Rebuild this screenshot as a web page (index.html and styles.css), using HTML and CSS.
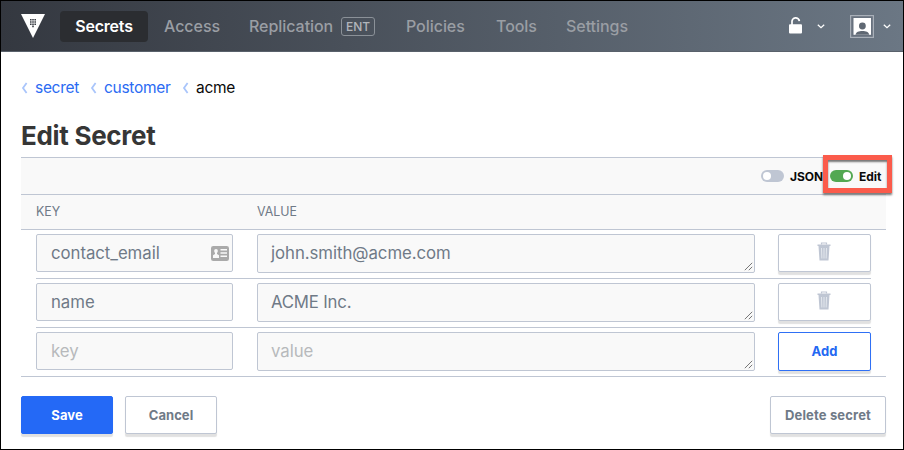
FILE: index.html
```html
<!DOCTYPE html>
<html lang="en">
<head>
<meta charset="utf-8">
<title>Edit Secret</title>
<link rel="stylesheet" href="styles.css">
</head>
<body>
<div class="frame">
  <header class="nav">
    <svg class="logo" width="24" height="24" viewBox="0 0 24 24"><path fill="#fff" d="M0 0h24L12 24z"/><path fill="#3b3f46" d="M9 5h1.6v1.6H9zM11.2 5h1.6v1.6h-1.6zM13.4 5H15v1.6h-1.6zM9 7.2h1.6v1.6H9zM11.2 7.2h1.6v1.6h-1.6zM13.4 7.2H15v1.6h-1.6zM9 9.4h1.6V11H9zM11.2 9.4h1.6V11h-1.6zM13.4 9.4H15V11h-1.6zM11.2 11.6h1.6v1.6h-1.6z"/></svg>
    <nav class="links">
      <a class="link active">Secrets</a>
      <a class="link access">Access</a>
      <a class="link replication">Replication</a><span class="tag">ENT</span>
      <a class="link policies">Policies</a>
      <a class="link tools">Tools</a>
      <a class="link settings">Settings</a>
    </nav>
    <div class="status">
      <svg class="lock" width="14" height="18" viewBox="0 0 14 18"><path fill="none" stroke="#fff" stroke-width="1.7" d="M3 8V5a3.7 3.7 0 0 1 7.4-.8"/><rect y="7.2" width="13" height="9.3" rx="1" fill="#fff"/></svg>
      <svg class="chev" width="8" height="5" viewBox="0 0 8 5"><path d="M.8.8 4 3.7 7.2.8" fill="none" stroke="#fff" stroke-width="1.3"/></svg>
      <svg class="user" width="24" height="23" viewBox="0 0 24 23"><rect x=".6" y=".6" width="22.8" height="21.8" fill="#68727f" stroke="#a8afb8" stroke-width="1.2"/><rect x="3.5" y="3" width="17.5" height="16.8" fill="#fff"/><circle cx="12.4" cy="11" r="3.4" fill="#5f6873"/><path d="M5.5 19.8c.5-2.700 3.300-3.700 6.900-3.700s6.300 1 6.800 3.700z" fill="#5f6873"/></svg>
      <svg class="chev" width="8" height="5" viewBox="0 0 8 5"><path d="M.8.8 4 3.7 7.2.8" fill="none" stroke="#fff" stroke-width="1.3"/></svg>
    </div>
  </header>
  <main class="page">
    <div class="crumbs">
      <svg class="sep" width="7" height="12" viewBox="0 0 7 12"><path d="M5.6 1 2 6l3.6 5"/></svg><a class="c1">secret</a>
      <svg class="sep" width="7" height="12" viewBox="0 0 7 12"><path d="M5.6 1 2 6l3.6 5"/></svg><a class="c2">customer</a>
      <svg class="sep" width="7" height="12" viewBox="0 0 7 12"><path d="M5.6 1 2 6l3.6 5"/></svg><span class="c3">acme</span>
    </div>
    <h1>Edit Secret</h1>
    <div class="toolbar">
      <span class="switch"></span><span class="opt json">JSON</span>
      <span class="switch on"></span><span class="opt edit">Edit</span>
      <div class="highlight"></div>
    </div>
    <div class="head"><span class="h-key">KEY</span><span class="h-value">VALUE</span></div>
    <div class="rows">
      <div class="row">
        <div class="field"><span>contact_email</span>
          <svg class="card" width="18" height="15" viewBox="0 0 18 15"><rect x=".8" y=".8" width="16.4" height="13.4" rx="1.5" fill="#aaa" stroke="#aaa" stroke-width="1.6"/><circle cx="5" cy="5" r="1.9" fill="#f9f9f9"/><path d="M4 6h2v2l2 1.2V12H2V9.2L4 8zM9.500 3h6.500v1.500H9.500zM9.500 6.200h6.500v1.500H9.500zM9.500 9.400h6.500v1.500H9.500z" fill="#f9f9f9"/></svg></div>
        <div class="field area"><span>john.smith@acme.com</span><svg class="grip" width="9" height="9" viewBox="0 0 9 9"><path d="M.8 8.2 8.2.8M4.8 8.2 8.2 4.8"/></svg></div>
        <button class="btn"><svg class="trash" width="14" height="19" viewBox="0 0 14 19"><path d="M4.500 2.500V1h5v1.500" fill="none" stroke="#bfc6d3" stroke-width="1.2"/><path d="M.5 2.500h13v1.600H.5zM1.500 4.100h11L11.500 18.500h-9z" fill="#bfc6d3"/><path d="M4.500 6l.4 10.500M7 6v10.500M9.500 6l-.4 10.500" stroke="#e4e8ee" stroke-width="1" fill="none"/></svg></button>
      </div>
      <div class="row">
        <div class="field"><span>name</span></div>
        <div class="field area"><span class="t-acme">ACME Inc.</span><svg class="grip" width="9" height="9" viewBox="0 0 9 9"><path d="M.8 8.2 8.2.8M4.8 8.2 8.2 4.8"/></svg></div>
        <button class="btn"><svg class="trash" width="14" height="19" viewBox="0 0 14 19"><path d="M4.500 2.500V1h5v1.500" fill="none" stroke="#bfc6d3" stroke-width="1.2"/><path d="M.5 2.500h13v1.600H.5zM1.500 4.100h11L11.500 18.500h-9z" fill="#bfc6d3"/><path d="M4.500 6l.4 10.500M7 6v10.500M9.500 6l-.4 10.500" stroke="#e4e8ee" stroke-width="1" fill="none"/></svg></button>
      </div>
      <div class="row">
        <div class="field empty"><span>key</span></div>
        <div class="field area empty"><span>value</span><svg class="grip" width="9" height="9" viewBox="0 0 9 9"><path d="M.8 8.2 8.2.8M4.8 8.2 8.2 4.8"/></svg></div>
        <button class="btn add">Add</button>
      </div>
    </div>
    <div class="actions">
      <button class="btn save">Save</button>
      <button class="btn cancel">Cancel</button>
      <button class="btn delete">Delete secret</button>
    </div>
  </main>
</div>
</body>
</html>
```
FILE: styles.css
```css
* { box-sizing: border-box; }
body { margin: 0; font-family: Inter, "Liberation Sans", sans-serif; background: #fff; }
.frame { width: 904px; height: 450px; border: 1px solid #000; overflow: hidden; }

.nav { height: 51px; display: flex; align-items: center; padding: 0 12px 0 20px; background: linear-gradient(90deg, #343840, #6b7784); border-bottom: 1px solid #59616b; }
.logo { margin-right: 15px; }
.links { display: flex; align-items: center; }
.link { font-size: 16px; font-weight: 500; line-height: 31px; color: #9a9ea4; white-space: nowrap; letter-spacing: -.05px; }
.active { width: 88px; text-align: center; font-weight: 600; letter-spacing: -.2px; color: #fff; background: #2b2d31; border-radius: 4px; }
.access { width: 85px; padding-left: 16px; }
.replication { width: 108px; padding-left: 16px; }
.tag { width: 34px; height: 19px; border: 1px solid #8b9198; border-radius: 3px; color: #b2b5ba; font-size: 12px; font-weight: 500; line-height: 17px; text-align: center; }
.policies { width: 90px; margin-left: 31px; }
.tools { width: 70px; }
.status { margin-left: auto; display: flex; align-items: center; }
.lock { margin-right: 14px; }
.user { margin: 0 9px 0 25px; }

.page { padding: 25px 17px 0 20px; }
.crumbs { display: flex; align-items: center; height: 20px; font-size: 15.5px; letter-spacing: -.3px; color: #0a0a0a; }
.crumbs a { color: #2b6bf3; }
.crumbs .c1 { width: 55px; }
.crumbs .c2 { width: 77px; }
.sep { margin: 1px 7px 0 0; fill: none; stroke: #a9c5fb; stroke-width: 1.8; flex: none; }
.crumbs .c2 + .sep { margin-left: 1px; }
h1 { margin: 24px 0 0; height: 36px; line-height: 30px; font-size: 26px; font-weight: 700; color: #363636; letter-spacing: -.3px; }

.toolbar { position: relative; height: 37px; border-top: 1px solid #bfc6d3; background: #f9f9f9; display: flex; align-items: center; padding-left: 740px; }
.switch { width: 23px; height: 12px; border-radius: 6px; background: #bfc6d3; padding: 2px; flex: none; }
.switch::before { content: ""; display: block; width: 8px; height: 8px; border-radius: 50%; background: #fff; }
.switch.on { background: #53a852; }
.switch.on::before { margin-left: 11px; }
.opt { font-size: 12px; font-weight: 700; color: #0a0a0a; padding-top: 1px; }
.json { width: 40px; margin-left: 6px; }
.edit { margin-left: 6px; }
.highlight { position: absolute; left: 802px; top: -3px; width: 69px; height: 38px; border: 5px solid #fb5b4b; box-shadow: 0 2px 2px #777, inset 0 2px 2px #777; }
.head { height: 36px; border: solid #bfc6d3; border-width: 1px 0; background: #f9f9f9; display: flex; line-height: 34px; font-size: 12.4px; color: #6f7a87; padding-left: 15px; }
.h-key { width: 221px; }

.rows { border-bottom: 1px solid #bfc6d3; padding: 0 15px; }
.row { display: flex; align-items: flex-start; height: 49px; padding-top: 4px; border-bottom: 1px solid #bfc6d3; }
.row:last-child { border: 0; height: 48px; }
.field { position: relative; width: 197px; height: 38px; border: 1px solid #bfc6d3; border-radius: 2px; background: #f9f9f9; color: #6f7a87; font-size: 16.8px; letter-spacing: -.05px; line-height: 37px; padding-left: 14px; }
.area { width: 498px; height: 39px; margin: 0 23px 0 24px; padding-left: 13px; }
.t-acme { letter-spacing: -.2px; }
.empty { color: #b7b9bc; }
.card { position: absolute; right: 3px; top: 11px; }
.grip { position: absolute; right: 1px; bottom: 1px; fill: none; stroke: #777; stroke-width: 1; }
.btn { width: 93px; height: 38px; padding: 0; border: 1px solid #bfc6d3; border-radius: 2px; background: #fff; box-shadow: 0 3px 1px #e1e1e1; font: 700 13px/34px Inter, "Liberation Sans", sans-serif; letter-spacing: .05px; color: #6f7a87; }
.trash { display: block; margin: -4px 0 0 38px; }
.add { height: 39px; border-color: #2f70f5; color: #2468f2; padding-bottom: 2px; }
.actions { display: flex; margin-top: 19px; }
.save { width: 92px; background: #2469f6; border-color: #2469f6; color: #fff; }
.cancel { width: 92px; margin-left: 12px; }
.delete { width: 116px; margin-left: auto; letter-spacing: .15px; }
```
